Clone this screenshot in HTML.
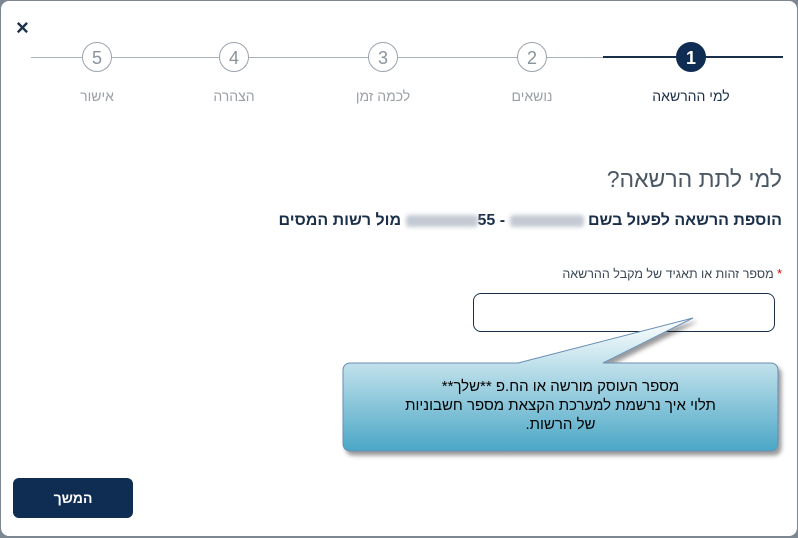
<!DOCTYPE html>
<html><head><meta charset="utf-8"><style>
body{margin:0;width:798px;height:538px;background:#7d8791;overflow:hidden;font-family:"Liberation Sans","DejaVu Sans",sans-serif;position:relative}
.card{position:absolute;left:1px;top:1px;width:796px;height:535px;background:#fff;border-radius:8px}
.a{position:absolute}
.c{position:absolute;width:30px;height:30px;border-radius:50%;border:1px solid #9aa3ad;background:#fff;color:#8a939c;font-size:18px;text-align:center;line-height:30px;box-sizing:border-box;top:42px}
.l{position:absolute;top:88px;font-size:14px;color:#9aa0a6;direction:rtl;white-space:nowrap;transform:translateX(-50%)}
.blur{display:inline-block;background:#c3cad3;filter:blur(2px);height:12px;vertical-align:middle;border-radius:3px}
</style></head><body><div class="card"></div>
<div class="a" style="left:16px;top:18px;font-size:22px;font-weight:bold;color:#1a2f4a;line-height:20px">×</div>
<div class="a" style="left:31px;top:57px;width:572px;height:1px;background:#aab1b8"></div>
<div class="a" style="left:603px;top:56px;width:180px;height:2px;background:#1a2f4a"></div>
<div class="c" style="left:82px">5</div>
<div class="c" style="left:219px">4</div>
<div class="c" style="left:368px">3</div>
<div class="c" style="left:517px">2</div>
<div class="c" style="left:676px;background:#0f2d52;border-color:#0f2d52;color:#fff;font-weight:bold">1</div>
<div class="l" style="left:97px">אישור</div>
<div class="l" style="left:234px">הצהרה</div>
<div class="l" style="left:383px">לכמה זמן</div>
<div class="l" style="left:532px">נושאים</div>
<div class="l" style="left:691px;color:#1a2f4a">למי ההרשאה</div>
<div class="a" style="right:16px;top:166px;font-size:23px;color:#4a5866;direction:rtl;font-weight:300">למי לתת הרשאה?</div>
<div class="a" style="right:16px;top:212px;font-size:16px;font-weight:bold;color:#1a2f4a;direction:rtl;white-space:nowrap">הוספת הרשאה לפעול בשם <span class="blur" style="width:74px"></span> - <span dir="ltr" style="unicode-bidi:isolate"><span class="blur" style="width:72px"></span>55</span> מול רשות המסים</div>
<div class="a" style="right:16px;top:267px;font-size:12.5px;color:#3a4652;direction:rtl"><span style="color:#d00">*</span> מספר זהות או תאגיד של מקבל ההרשאה</div>
<div class="a" style="left:473px;top:293px;width:302px;height:39px;border:1px solid #1a2f4a;border-radius:8px;box-sizing:border-box"></div>
<svg class="a" style="left:0;top:0" width="798" height="538">
<defs><linearGradient id="g" x1="0" y1="0" x2="0" y2="1"><stop offset="0" stop-color="#ffffff"/><stop offset="1" stop-color="#4aa7c6"/></linearGradient>
<filter id="s"><feDropShadow dx="3" dy="4" stdDeviation="2" flood-color="#000" flood-opacity="0.4"/></filter></defs>
<g filter="url(#s)"><path d="M351,363 L518,363 L693,318 L603,363 L770,363 Q778,363 778,371 L778,443 Q778,451 770,451 L351,451 Q343,451 343,443 L343,371 Q343,363 351,363 Z" fill="url(#g)" stroke="#6a8fb4" stroke-width="1"/></g>
</svg>
<div class="a" style="left:343px;top:377px;width:435px;text-align:center;direction:rtl;font-size:15px;line-height:19px;color:#000">מספר העוסק מורשה או הח.פ **שלך**<br>תלוי איך נרשמת למערכת הקצאת מספר חשבוניות<br>של הרשות.</div>
<div class="a" style="left:13px;top:478px;width:120px;height:40px;background:#0f2d52;border-radius:6px;color:#fff;font-weight:bold;font-size:14px;text-align:center;line-height:40px">המשך</div>
</body></html>
